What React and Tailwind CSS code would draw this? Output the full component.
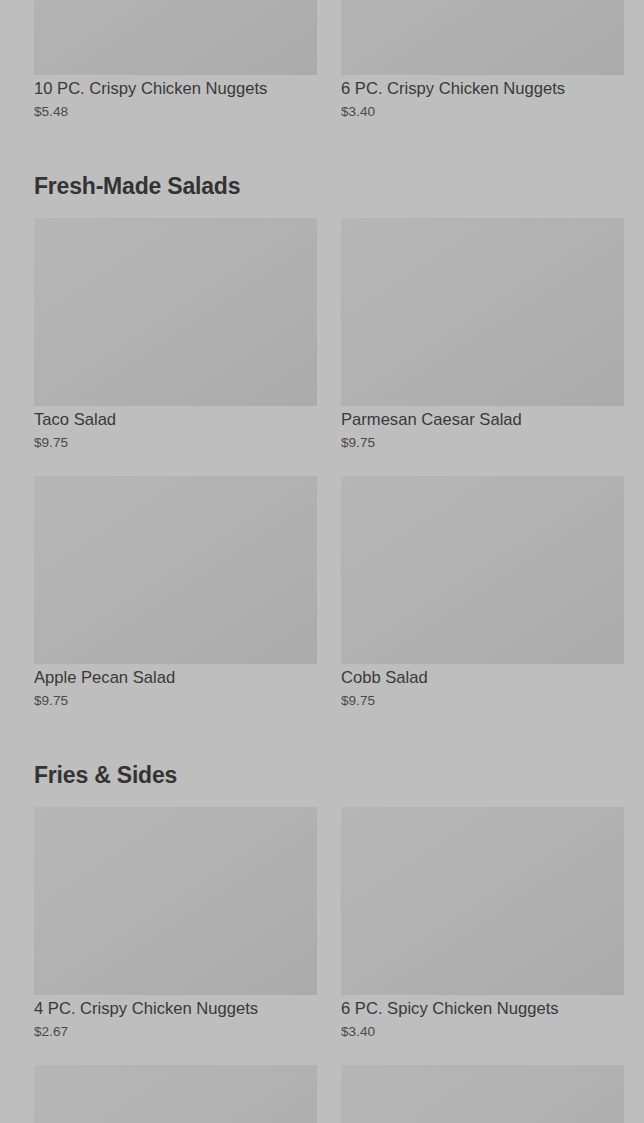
import React from "react";

const sections = [
  {
    title: null,
    items: [
      { name: "10 PC. Crispy Chicken Nuggets", price: "$5.48" },
      { name: "6 PC. Crispy Chicken Nuggets", price: "$3.40" },
    ],
  },
  {
    title: "Fresh-Made Salads",
    items: [
      { name: "Taco Salad", price: "$9.75" },
      { name: "Parmesan Caesar Salad", price: "$9.75" },
      { name: "Apple Pecan Salad", price: "$9.75" },
      { name: "Cobb Salad", price: "$9.75" },
    ],
  },
  {
    title: "Fries & Sides",
    items: [
      { name: "4 PC. Crispy Chicken Nuggets", price: "$2.67" },
      { name: "6 PC. Spicy Chicken Nuggets", price: "$3.40" },
      { name: null, price: null },
      { name: null, price: null },
    ],
  },
];

function Card({ item }) {
  return (
    <div className="flex flex-col">
      <div className="h-[188px] bg-gradient-to-br from-[#b6b6b6] via-[#b1b1b1] to-[#ababab]" />
      {item.name && (
        <>
          <div className="mt-[3px] text-[16.6px] leading-[22px] text-[#393939] font-['Liberation_Sans',sans-serif]">
            {item.name}
          </div>
          <div className="mt-[3px] text-[13.6px] leading-[18px] text-[#4a4a4a] font-['Liberation_Sans',sans-serif]">
            {item.price}
          </div>
        </>
      )}
    </div>
  );
}

export default function App() {
  return (
    <div className="h-[1123px] overflow-hidden bg-[#bebebe] pl-[34px] pr-[20px]">
      {sections.map((s, i) => (
        <div key={i} className={i === 0 ? "-mt-[113px]" : "mt-[51px]"}>
          {s.title && (
            <h2 className="mb-[17px] text-[23px] leading-[29px] font-bold tracking-[-0.2px] text-[#333333] font-['Liberation_Sans',sans-serif]">
              {s.title}
            </h2>
          )}
          <div className="grid grid-cols-2 gap-x-[24px] gap-y-[24px]">
            {s.items.map((it, j) => (
              <Card key={j} item={it} />
            ))}
          </div>
        </div>
      ))}
    </div>
  );
}
